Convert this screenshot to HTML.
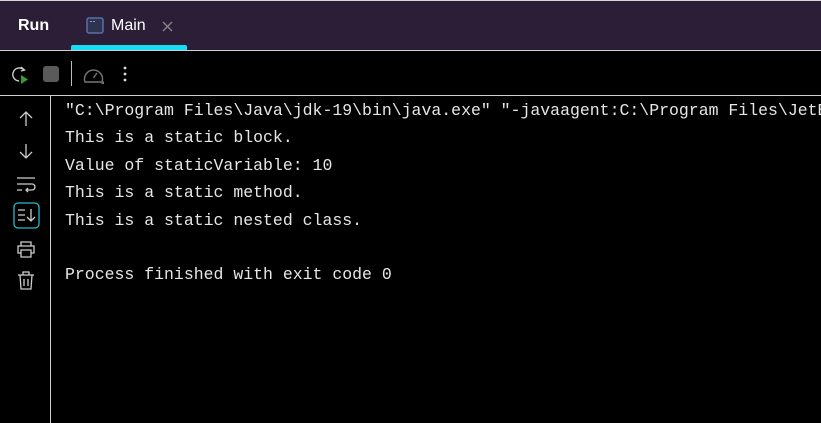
<!DOCTYPE html>
<html><head><style>
body{margin:0;width:821px;height:423px;background:#000;overflow:hidden;position:relative;font-family:"Liberation Sans",sans-serif}
.hdr{position:absolute;left:0;top:0;width:821px;height:50px;background:#2b1e36;border-top:1px solid #d8d8d8;box-sizing:border-box}
.hl{position:absolute;left:0;width:821px;height:1px;background:#d0d0d0}
.vl{position:absolute;left:50px;top:96px;width:1px;height:327px;background:#d0d0d0}
.txt{position:absolute;left:65px;top:97px;width:756px;overflow:hidden;font-family:"Liberation Mono",monospace;font-size:16.5px;line-height:27.4px;color:#e6e6e6;white-space:pre}
svg{position:absolute}
</style></head><body>
<div class="hdr"></div>
<div style="position:absolute;left:18px;top:17px;color:#fff;font-size:16px;font-weight:bold">Run</div>
<svg style="left:86px;top:17px" width="18" height="17"><rect x="1" y="1" width="16" height="15" rx="2" fill="#2e3350" stroke="#5a6eaa" stroke-width="1.5"/><path d="M4 4.5h2M7 4.5h2" stroke="#8899cc"/></svg>
<div style="position:absolute;left:111px;top:17px;color:#fff;font-size:16px">Main</div>
<svg style="left:162px;top:21px" width="11" height="11"><path d="M1 1L10 10M10 1L1 10" stroke="#888" stroke-width="1.3"/></svg>
<div style="position:absolute;left:71px;top:45px;width:116px;height:5px;background:#18dcf5;border-radius:2px 2px 0 0"></div>
<div class="hl" style="top:50px"></div>
<div class="hl" style="top:95px"></div>
<div class="vl"></div>
<svg style="left:9px;top:64px" width="22" height="22"><path d="M15 6A6.5 6.5 0 1 0 10 17" fill="none" stroke="#ccc" stroke-width="1.4"/><path d="M12 3l3.5 3-3.5 1" fill="none" stroke="#ccc" stroke-width="1.4"/><path d="M12 11l7 4.5-7 4.5z" fill="#3a9a3a"/></svg>
<div style="position:absolute;left:43px;top:66px;width:16px;height:16px;background:#5a5a5a;border-radius:3px"></div>
<div style="position:absolute;left:71px;top:61px;width:1px;height:25px;background:#bbb"></div>
<svg style="left:82px;top:64px" width="24" height="22"><path d="M3 18A9 9 0 1 1 20 18Z" fill="none" stroke="#777" stroke-width="1.4"/><path d="M11.5 14L15 9" stroke="#777" stroke-width="1.4"/><path d="M19 20l3-3v3z" fill="#777"/></svg>
<svg style="left:122px;top:65px" width="6" height="18"><circle cx="3" cy="3" r="1.4" fill="#ddd"/><circle cx="3" cy="9" r="1.4" fill="#ddd"/><circle cx="3" cy="15" r="1.4" fill="#ddd"/></svg>
<svg style="left:17px;top:110px" width="18" height="18"><path d="M9 2V16M3 8L9 2L15 8" fill="none" stroke="#ccc" stroke-width="1.3"/></svg>
<svg style="left:17px;top:142px" width="18" height="18"><path d="M9 2V16M3 10L9 16L15 10" fill="none" stroke="#ccc" stroke-width="1.3"/></svg>
<svg style="left:16px;top:176px" width="20" height="18"><path d="M1 2h18M1 8h15a3 3 0 0 1 0 6h-6M1 14h5M12 12l-2 2 2 2" fill="none" stroke="#ccc" stroke-width="1.3"/></svg>
<svg style="left:13px;top:202px" width="27" height="27"><rect x="1" y="1" width="25" height="25" rx="4" fill="none" stroke="#2ab8c8" stroke-width="1.3"/><path d="M5 8h7M5 13h7M5 18h7M18 7v12M14 15l4 4 4-4" fill="none" stroke="#ccc" stroke-width="1.3"/></svg>
<svg style="left:16px;top:240px" width="20" height="18"><path d="M5 6V2h10v4M5 13H2V6h16v7h-3M5 10h10v7H5z" fill="none" stroke="#ccc" stroke-width="1.3"/></svg>
<svg style="left:17px;top:271px" width="18" height="20"><path d="M1 4h16M6 4V1h6v3M3 4l1 14h10l1-14M7 8v7M11 8v7" fill="none" stroke="#ccc" stroke-width="1.3"/></svg>
<div class="txt">"C:\Program Files\Java\jdk-19\bin\java.exe" "-javaagent:C:\Program Files\JetBrains
This is a static block.
Value of staticVariable: 10
This is a static method.
This is a static nested class.

Process finished with exit code 0</div>
</body></html>
